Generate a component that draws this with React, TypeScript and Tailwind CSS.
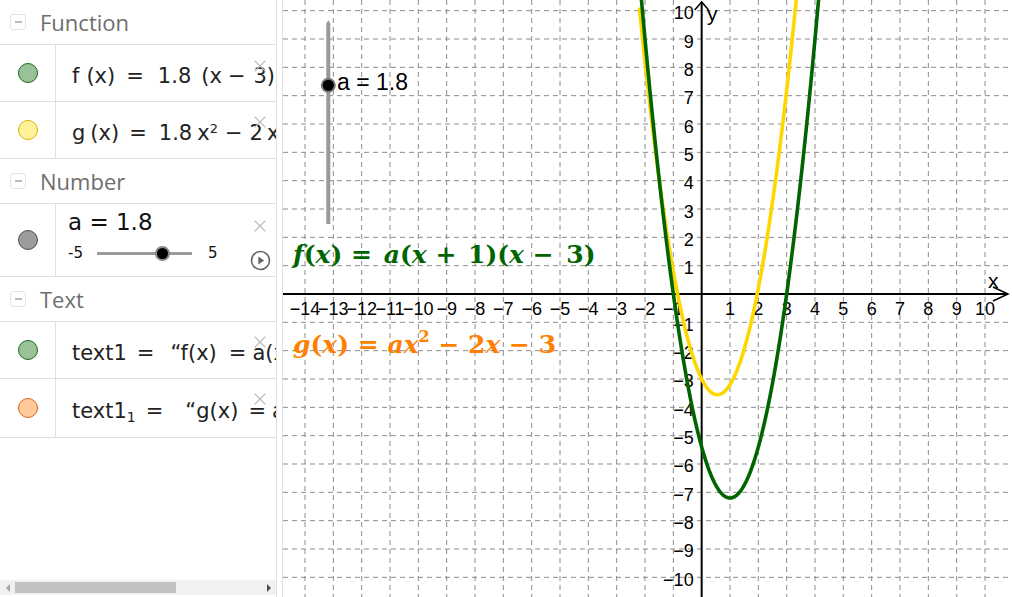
import React from 'react';
import { X } from 'lucide-react';

// graphics view geometry (px, relative to the canvas)
const W = 729;
const H = 597;
const OX = 418.67;
const OY = 294;
const U = 28.333;

const sx = (x: number) => OX + x * U;
const sy = (y: number) => OY - y * U;

const f = (x: number) => 1.8 * (x + 1) * (x - 3);
const g = (x: number) => 1.8 * x * x - 2 * x - 3;

function curve(fn: (x: number) => number) {
  const pts: string[] = [];
  for (let x = -2.2; x <= 4.6; x += 0.01) {
    const y = Math.max(-30, Math.min(30, fn(x)));
    pts.push(`${sx(x).toFixed(2)},${sy(y).toFixed(2)}`);
  }
  return 'M' + pts.join('L');
}

const MINUS = '\u2212';
const NB = '\u00a0';

function Toggle() {
  return (
    <div className="w-[16px] h-[16px] rounded-[3px] border border-[#e4e4e4] flex items-center justify-center">
      <div className="w-[7px] h-[1.5px] bg-[#bdbdbd]" />
    </div>
  );
}

function Header({ title }: { title: string }) {
  return (
    <div className="h-[45px] border-b border-[#e0e0e0] flex items-center pl-[10px] gap-[14px]">
      <Toggle />
      <span className="text-[22px] text-[#6e6e6e] font-['Open_Sans',sans-serif] leading-none">{title}</span>
    </div>
  );
}

function Marble({ fill, stroke }: { fill: string; stroke: string }) {
  return <div className="w-[20px] h-[20px] rounded-full border" style={{ background: fill, borderColor: stroke }} />;
}

function Close({ top }: { top: number }) {
  return (
    <div className="absolute right-[6px]" style={{ top }}>
      <X size={20} strokeWidth={1.4} color="#bdbdbd" />
    </div>
  );
}

function Row({
  fill,
  stroke,
  children,
  h = 'h-[57px]',
}: {
  fill: string;
  stroke: string;
  children: React.ReactNode;
  h?: string;
}) {
  return (
    <div className={`relative flex border-b border-[#e0e0e0] ${h}`}>
      <div className="w-[56px] shrink-0 border-r border-[#e0e0e0] flex items-center justify-center">
        <Marble fill={fill} stroke={stroke} />
      </div>
      <div className="flex-1 min-w-0 overflow-hidden">{children}</div>
    </div>
  );
}

function AlgebraText({ children }: { children: React.ReactNode }) {
  return (
    <div className="h-full flex items-center pt-[8px] pl-[16px] whitespace-nowrap text-[21px] text-[#222] font-['DejaVu_Sans',sans-serif]">
      {children}
    </div>
  );
}

function Sidebar() {
  return (
    <aside className="w-[277px] shrink-0 border-r border-[#e0e0e0] flex flex-col bg-white">
      <Header title="Function" />
      <Row fill="#99c299" stroke="#1a6b1a">
        <AlgebraText>
          <span>f</span>
          <span className="ml-[7px]">(x)</span>
          <span className="ml-[11px]">=</span>
          <span className="ml-[14px]">1.8</span>
          <span className="ml-[10px]">(x</span>
          <span className="ml-[6px]">{MINUS}</span>
          <span className="ml-[8px]">3)</span>
          <span className="ml-[8px]">(x + 1)</span>
        </AlgebraText>
        <Close top={11} />
      </Row>
      <Row fill="#fff29a" stroke="#d6b300">
        <AlgebraText>
          <span>g</span>
          <span className="ml-[5px]">(x)</span>
          <span className="ml-[10px]">=</span>
          <span className="ml-[12px]">1.8</span>
          <span className="ml-[5px]">
            x<sup className="text-[13px] -top-[7px]">2</sup>
          </span>
          <span className="ml-[7px]">{MINUS}</span>
          <span className="ml-[7px]">2</span>
          <span className="ml-[4px]">x</span>
          <span className="ml-[7px]">{MINUS}</span>
          <span className="ml-[7px]">3</span>
        </AlgebraText>
        <Close top={10} />
      </Row>

      <Header title="Number" />
      <Row fill="#9b9b9b" stroke="#4d4d4d" h="h-[73px]">
        <div className="h-full flex flex-col pl-[12px] pt-[3px] font-['DejaVu_Sans',sans-serif] text-[#111]">
          <span className="text-[23px] leading-[30px]">a = 1.8</span>
          <div className="flex items-center mt-[5px] text-[15px]">
            <span className="w-[29px]">-5</span>
            <div className="relative w-[95px] h-[3px] bg-[#9a9a9a]">
              <div className="absolute left-[58px] -top-[6px] w-[15px] h-[15px] rounded-full bg-black border-[2px] border-[#8a8a8a]" />
            </div>
            <span className="ml-[16px]">5</span>
          </div>
        </div>
        <Close top={12} />
        <div className="absolute right-[5px] top-[46px]">
          <svg width="21" height="21" viewBox="0 0 21 21">
            <circle cx="10.5" cy="10.5" r="9" fill="none" stroke="#666" strokeWidth="1.6" />
            <path d="M8.3 6.6 L14.2 10.5 L8.3 14.4 Z" fill="#666" />
          </svg>
        </div>
      </Row>

      <Header title="Text" />
      <Row fill="#99c299" stroke="#1a6b1a">
        <AlgebraText>
          <span>text1</span>
          <span className="ml-[10px]">=</span>
          <span className="ml-[16px]">“f(x)</span>
          <span className="ml-[12px]">=</span>
          <span className="ml-[6px]">a(x + 1)(x {MINUS} 3)”</span>
        </AlgebraText>
        <Close top={10} />
      </Row>
      <Row fill="#ffc999" stroke="#d9661a" h="h-[59px]">
        <AlgebraText>
          <span>
            text1<sub className="text-[14px] top-[4px]">1</sub>
          </span>
          <span className="ml-[10px]">=</span>
          <span className="ml-[22px]">“g(x)</span>
          <span className="ml-[10px]">=</span>
          <span className="ml-[6px]">ax² {MINUS} 2x {MINUS} 3”</span>
        </AlgebraText>
        <Close top={10} />
      </Row>

      <div className="mt-auto mb-[2px] h-[15px] bg-[#f1f1f1] flex items-center">
        <div className="w-[15px] flex justify-center">
          <div className="w-0 h-0 border-y-[4px] border-y-transparent border-r-[4px] border-r-[#a3a3a3]" />
        </div>
        <div className="w-[161px] h-[11px] bg-[#c1c1c1]" />
        <div className="flex-1" />
        <div className="w-[15px] flex justify-center">
          <div className="w-0 h-0 border-y-[4px] border-y-transparent border-l-[4px] border-l-[#505050]" />
        </div>
      </div>
    </aside>
  );
}

const serif = { fontFamily: '"DejaVu Serif", "Liberation Serif", serif' };

function Graphics() {
  const vLines: number[] = [];
  for (let k = -15; k <= 11; k++) {
    const x = sx(k);
    if (x > 0 && x < W) vLines.push(k);
  }
  const hLines: number[] = [];
  for (let j = -11; j <= 11; j++) {
    const y = sy(j);
    if (y > 0 && y < H) hLines.push(j);
  }
  const sliderTop = 20;
  const sliderBottom = 224;
  const aY = sliderBottom - ((1.8 + 5) / 10) * (sliderBottom - sliderTop);

  return (
    <div className="flex-1 relative border-l border-[#e0e0e0] bg-white overflow-hidden">
      <svg width={W} height={H} className="block" style={{ fontFamily: '"Liberation Sans", Arial, sans-serif' }}>
        {vLines.map((k) =>
          k === 0 ? null : (
            <line key={'v' + k} x1={sx(k)} y1={0} x2={sx(k)} y2={H} stroke="#8c8c8c" strokeWidth={1} strokeDasharray="5 4" />
          )
        )}
        {hLines.map((j) =>
          j === 0 ? null : (
            <line key={'h' + j} x1={0} y1={sy(j)} x2={W} y2={sy(j)} stroke="#8c8c8c" strokeWidth={1} strokeDasharray="5 4" />
          )
        )}

        {/* axes */}
        <line x1={0} y1={OY} x2={W - 4} y2={OY} stroke="#000" strokeWidth={2} />
        <polyline points={`${W - 19},${OY - 7} ${W - 4},${OY} ${W - 19},${OY + 7}`} fill="none" stroke="#000" strokeWidth={1.5} />
        <line x1={OX} y1={2} x2={OX} y2={H} stroke="#000" strokeWidth={2} />
        <polyline points={`${OX - 7},${10} ${OX},${2} ${OX + 7},${10}`} fill="none" stroke="#000" strokeWidth={1.5} />
        <text x={705} y={288} fontSize={21} fill="#000">x</text>
        <text x={424} y={21} fontSize={21} fill="#000">y</text>

        {/* axis numbers */}
        {vLines.map((k) =>
          k === 0 ? null : (
            <text key={'xl' + k} x={sx(k)} y={OY + 21} fontSize={18} textAnchor="middle" fill="#000">
              {k < 0 ? MINUS + Math.abs(k) : k}
            </text>
          )
        )}
        {hLines.map((j) =>
          j === 0 || j > 10 || j < -10 ? null : (
            <text key={'yl' + j} x={OX - 8} y={sy(j) + 8.5} fontSize={18} textAnchor="end" fill="#000">
              {j < 0 ? MINUS + Math.abs(j) : j}
            </text>
          )
        )}

        {/* curves */}
        <path d={curve(g)} fill="none" stroke="#ffd700" strokeWidth={3.6} strokeLinejoin="round" />
        <path d={curve(f)} fill="none" stroke="#006400" strokeWidth={3.6} strokeLinejoin="round" />

        {/* slider a */}
        <line x1={45.3} y1={sliderTop + 3} x2={45.3} y2={sliderBottom} stroke="#999" strokeWidth={4} />
        <path d={`M43.3 ${sliderTop + 4} L45.3 ${sliderTop} L47.3 ${sliderTop + 4} Z`} fill="#999" />
        <circle cx={45.3} cy={aY} r={7.5} fill="#7a7a7a" />
        <circle cx={45.3} cy={aY} r={5.6} fill="#000" />
        <text x={54} y={90} fontSize={23} fill="#000">a = 1.8</text>

        {/* dynamic texts */}
        <text x={10} y={263} fontSize={25} fontWeight="bold" fill="#006400" style={serif}>
          <tspan fontStyle="italic">f</tspan>
          <tspan>(</tspan>
          <tspan fontStyle="italic">x</tspan>
          <tspan>){NB + '=' + NB}</tspan>
          <tspan fontStyle="italic" dx={3}>a</tspan>
          <tspan>(</tspan>
          <tspan fontStyle="italic">x</tspan>
          <tspan>{NB + '+' + NB}</tspan>
          <tspan dx={3}>1)(</tspan>
          <tspan fontStyle="italic">x</tspan>
          <tspan>{NB + MINUS + NB}</tspan>
          <tspan dx={4}>3)</tspan>
        </text>
        <text x={10} y={353} fontSize={25} fontWeight="bold" fill="#ff7f00" style={serif}>
          <tspan fontStyle="italic">g</tspan>
          <tspan>(</tspan>
          <tspan fontStyle="italic">x</tspan>
          <tspan>){NB + '=' + NB}</tspan>
          <tspan fontStyle="italic">ax</tspan>
          <tspan fontSize={16} dy={-11}>2</tspan>
          <tspan dy={11}>{NB + MINUS + NB}2</tspan>
          <tspan fontStyle="italic">x</tspan>
          <tspan>{NB + MINUS + NB}3</tspan>
        </text>
      </svg>
    </div>
  );
}

export default function App() {
  return (
    <div className="w-[1012px] h-[597px] flex bg-white overflow-hidden">
      <Sidebar />
      <div className="w-[5px] shrink-0 bg-white" />
      <Graphics />
    </div>
  );
}
